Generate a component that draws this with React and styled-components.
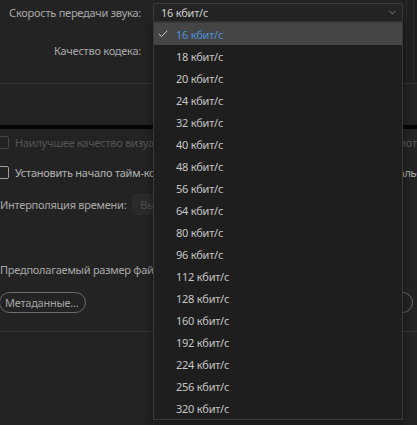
import React from "react";
import styled, { createGlobalStyle } from "styled-components";
import { Check, ChevronDown } from "lucide-react";

const GlobalStyle = createGlobalStyle`
  html, body {
    margin: 0;
    padding: 0;
    background: #232323;
  }
  body {
    font-family: "Noto Sans", "Open Sans", sans-serif;
    font-size: 11px;
    letter-spacing: -0.25px;
    color: #a9a9a9;
  }
`;

const Page = styled.div`
  width: 417px;
  height: 425px;
  overflow: hidden;
  background: #232323;
  display: flex;
  flex-direction: column;
`;

const TopPanel = styled.div`
  height: 83px;
  flex-shrink: 0;
  display: flex;
  border-bottom: 1px solid #323232;
`;

const Form = styled.div`
  display: grid;
  grid-template-columns: 141px 250px;
  grid-template-rows: 19px 20px;
  column-gap: 12px;
  row-gap: 18px;
  padding-top: 3px;
  align-items: center;
`;

const Label = styled.div`
  text-align: right;
  white-space: nowrap;
  color: #a9a9a9;
`;

const ScrollTrack = styled.div`
  flex: 1;
  background: #1f1f1f;
  display: flex;
  padding-left: 3px;

  &::after {
    content: "";
    width: 6px;
    border-left: 1px solid #2b2b2b;
    border-right: 1px solid #2b2b2b;
  }
`;

const SelectWrap = styled.div`
  position: relative;
  height: 100%;
`;

const Field = styled.div`
  box-sizing: border-box;
  height: 100%;
  display: flex;
  align-items: center;
  justify-content: space-between;
  padding: 0 4px 0 7px;
  border: 1px solid #3a3a3a;
  border-radius: 2px;
  background: #242424;
  color: ${(p) => (p.$dim ? "#5a5a5a" : "#d0d0d0")};
`;

const Menu = styled.ul`
  position: absolute;
  left: 0;
  top: 19px;
  width: 250px;
  box-sizing: border-box;
  margin: 0;
  padding: 0;
  list-style: none;
  background: #1e1e1e;
  border: 1px solid #3a3a3a;
  box-shadow: 0 3px 8px rgba(0, 0, 0, 0.45);
  z-index: 10;
`;

const Item = styled.li`
  height: 22px;
  display: flex;
  align-items: center;
  padding-left: 3px;
  background: ${(p) => (p.$selected ? "#454545" : "transparent")};
  color: ${(p) => (p.$selected ? "#4b8fd8" : "#c6c6c6")};
`;

const CheckSlot = styled.span`
  width: 19px;
  display: flex;
  align-items: center;
  color: #c8c8c8;
`;

const MidPanel = styled.div`
  height: 41px;
  flex-shrink: 0;
`;

const Splitter = styled.div`
  height: 4px;
  flex-shrink: 0;
  background: #050505;
`;

const LowerPanel = styled.div`
  height: 202px;
  flex-shrink: 0;
  display: flex;
  flex-direction: column;
  border-bottom: 1px solid #353535;
`;

const Row = styled.div`
  margin-top: ${(p) => p.$top}px;
  height: ${(p) => p.$h}px;
  display: flex;
  align-items: center;
  white-space: nowrap;
`;

const CheckRow = styled(Row)`
  display: grid;
  grid-template-columns: 284px 1fr;
  margin-left: -4px;
`;

const CheckItem = styled.label`
  display: flex;
  align-items: center;
  gap: 6px;
  white-space: nowrap;
  overflow: hidden;
  color: ${(p) => (p.$disabled ? "#555555" : "#b4b4b4")};
`;

const Box = styled.span`
  box-sizing: border-box;
  width: 13px;
  height: 13px;
  flex-shrink: 0;
  border: 1px solid ${(p) => (p.$disabled ? "#464646" : "#9c9c9c")};
  border-radius: 2px;
`;

const InlineSelect = styled.div`
  margin-left: 6px;
  width: 170px;
  height: 21px;
  display: flex;
  align-items: center;
  padding-left: 8px;
  border-radius: 2px;
  background: #2a2a2a;
  color: #4c4c4c;
`;

const ButtonRow = styled(Row)`
  justify-content: space-between;
  padding-right: 4px;
  margin-left: -1px;
`;

const ButtonGroup = styled.div`
  display: flex;
  gap: 8px;
`;

const Pill = styled.button`
  box-sizing: border-box;
  height: 21px;
  padding: 0 7px 0 5px;
  border: 1px solid #6c6c6c;
  border-radius: 11px;
  background: transparent;
  font: inherit;
  letter-spacing: inherit;
  color: #a4a4a4;
  min-width: ${(p) => p.$min || 0}px;
`;

const rates = [16, 18, 20, 24, 32, 40, 48, 56, 64, 80, 96, 112, 128, 160, 192, 224, 256, 320];

export default function App() {
  const selected = 16;

  return (
    <Page>
      <GlobalStyle />
      <TopPanel>
        <Form>
          <Label>Скорость передачи звука:</Label>
          <SelectWrap>
            <Field>
              <span>{selected} кбит/с</span>
              <ChevronDown size={11} strokeWidth={1.5} color="#a8a8a8" />
            </Field>
            <Menu>
              {rates.map((r) => (
                <Item key={r} $selected={r === selected}>
                  <CheckSlot>{r === selected && <Check size={12} strokeWidth={2} />}</CheckSlot>
                  {r} кбит/с
                </Item>
              ))}
            </Menu>
          </SelectWrap>
          <Label>Качество кодека:</Label>
          <Field>Высокое</Field>
        </Form>
        <ScrollTrack />
      </TopPanel>
      <MidPanel />
      <Splitter />
      <LowerPanel>
        <CheckRow $top={7} $h={13}>
          <CheckItem $disabled>
            <Box $disabled />
            Наилучшее качество визуализации
          </CheckItem>
          <CheckItem $disabled>
            <Box $disabled />
            Использовать просмотры
          </CheckItem>
        </CheckRow>
        <CheckRow $top={17} $h={13}>
          <CheckItem>
            <Box />
            Установить начало тайм-кода
          </CheckItem>
          <CheckItem>
            <Box />
            Визуализировать с альфа-каналом
          </CheckItem>
        </CheckRow>
        <Row $top={15} $h={21}>
          Интерполяция времени:
          <InlineSelect>Выборка кадров</InlineSelect>
        </Row>
        <Row $top={47} $h={14}>
          Предполагаемый размер файла: 1 МБ
        </Row>
        <ButtonRow $top={16} $h={21}>
          <Pill>Метаданные...</Pill>
          <ButtonGroup>
            <Pill $min={60}>Очередь</Pill>
            <Pill $min={60}>Экспорт</Pill>
            <Pill $min={60}>Отмена</Pill>
          </ButtonGroup>
        </ButtonRow>
      </LowerPanel>
    </Page>
  );
}
